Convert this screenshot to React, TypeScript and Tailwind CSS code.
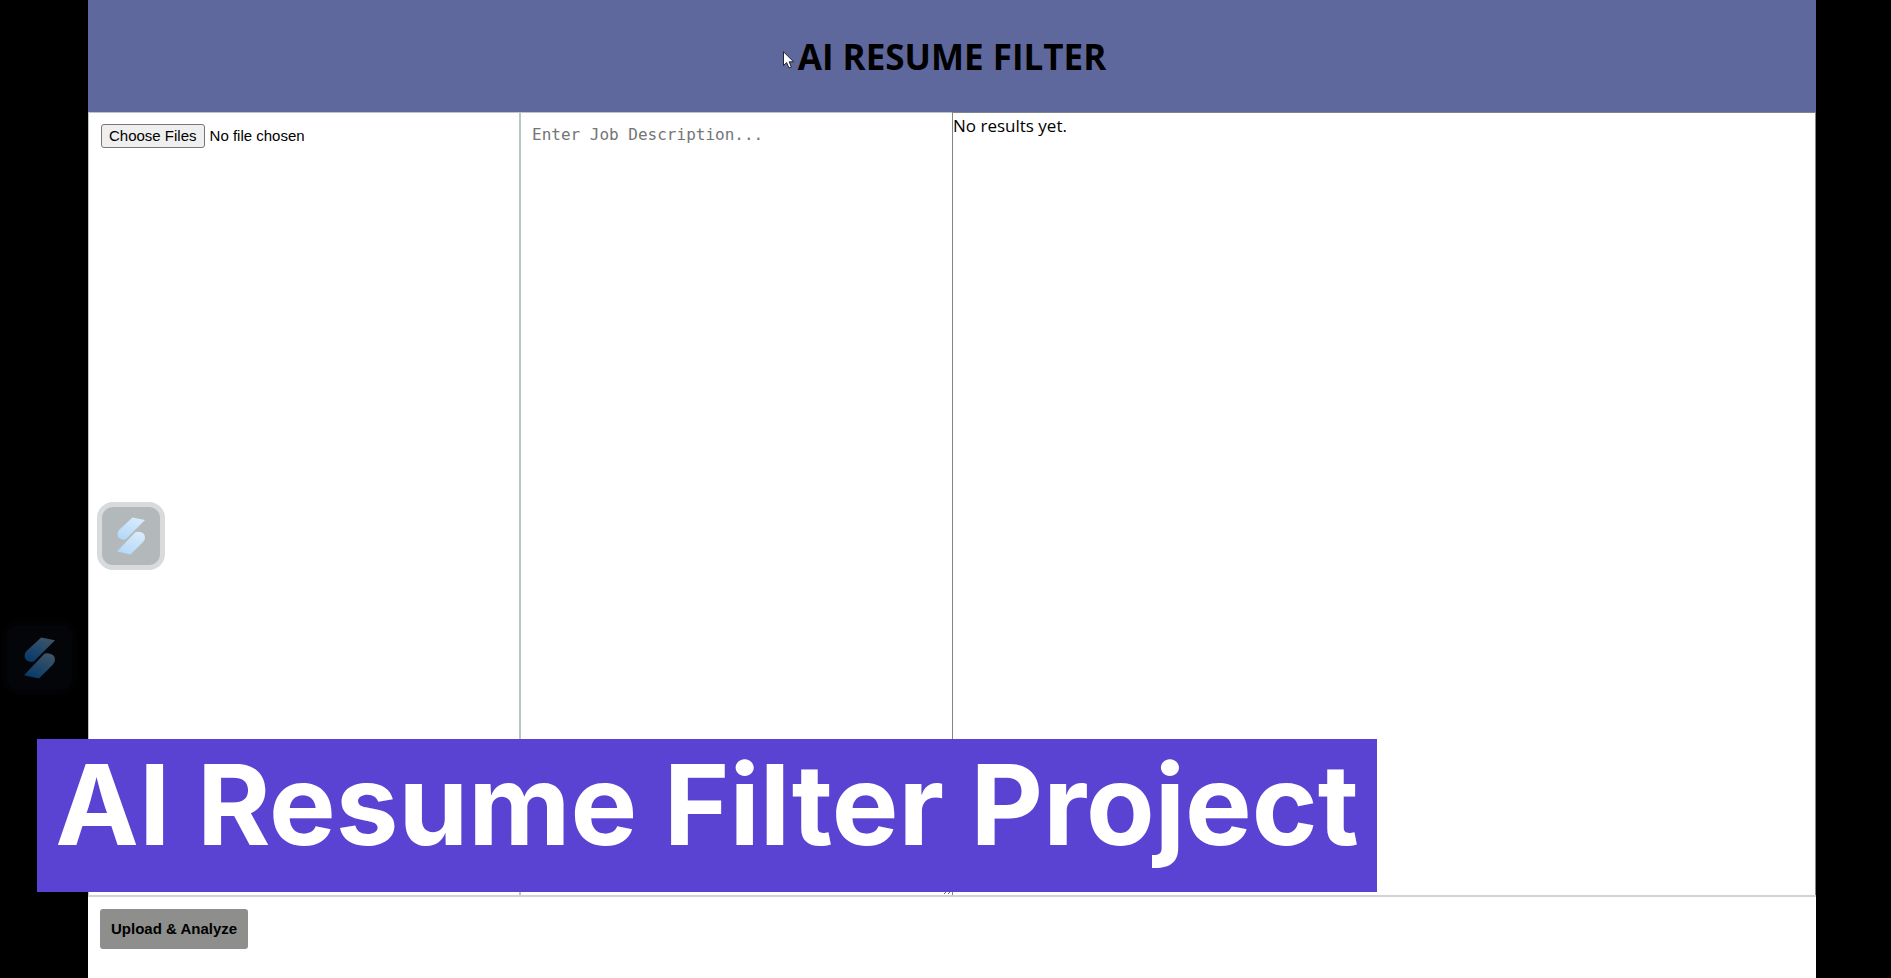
import { useState } from "react";

function SMark({ id, from, to, className }: { id: string; from: string; to: string; className: string }) {
  return (
    <svg viewBox="0 0 28 38" className={className} aria-hidden="true">
      <defs>
        <linearGradient id={id} x1="0.8" y1="0" x2="0.3" y2="1">
          <stop offset="0" stopColor={from} />
          <stop offset="1" stopColor={to} />
        </linearGradient>
      </defs>
      <path d="M15.500 0.500 L28 3 L9.500 21.500 Q8 23 5.500 22.500 Q0.500 21.500 0.500 17 Q0.500 14.500 2.500 12.500 Z" fill={`url(#${id})`} />
      <path d="M0 34.500 L17.500 16 Q19 14.500 21.500 14.800 Q28 15.500 28 20.500 Q28 23 26 25 L13.500 37.500 Z" fill={`url(#${id})`} />
    </svg>
  );
}

export default function App() {
  const [description, setDescription] = useState("");

  return (
    <div className="relative flex min-h-screen flex-col bg-black pl-[88px] pr-[75px] font-['Open_Sans','Noto_Sans',sans-serif] text-black">
      <header className="flex h-28 items-center justify-center bg-[#5f689c] pt-0.5">
        <h1 className="text-[35px] font-bold">AI RESUME FILTER</h1>
      </header>

      <main className="grid flex-1 grid-cols-[1fr_1fr_2fr] border-b-2 border-[#d0d4d4] bg-white">
        <section className="border-l border-t border-[#bcc6c6] px-3 py-[10px]">
          <input
            type="file"
            multiple
            aria-label="Resume files"
            className="w-full font-['Liberation_Sans',sans-serif] text-[15px] leading-5 file:me-[5px] file:rounded-[3px] file:border file:border-solid file:border-[#767676] file:bg-[#efefef] file:px-[7px] file:py-px"
          />
        </section>
        <textarea
          aria-label="Job description"
          placeholder="Enter Job Description..."
          value={description}
          onChange={(event) => setDescription(event.target.value)}
          className="-ml-px resize border-l-2 border-t border-[#bcc6c6] px-[11px] py-[10px] font-['DejaVu_Sans_Mono',monospace] text-base outline-none placeholder:text-[#757575]"
        />
        <section className="border-x border-t border-[#808585]">
          <p className="text-[17px] leading-[26px]">No results yet.</p>
        </section>
      </main>

      <footer className="h-[81px] bg-white px-3 py-3">
        <button
          type="button"
          className="h-10 rounded-[3px] bg-[#8e8f8d] px-[11px] font-['Liberation_Sans',sans-serif] text-[15px] font-bold"
        >
          Upload &amp; Analyze
        </button>
      </footer>

      <div className="absolute left-[97px] top-[502px] flex size-[68px] items-center justify-center rounded-2xl border-[5px] border-[#d8dadc] bg-[#b3b8bb]">
        <SMark id="mark-light" from="#d9ecfb" to="#b5d8f8" className="h-[38px] w-7" />
      </div>
      <div className="absolute left-[2px] top-[620px] flex size-[75px] items-center justify-center rounded-2xl border-[5px] border-[#020205] bg-[#040509]">
        <SMark id="mark-dark" from="#3f5568" to="#083a6a" className="h-[42px] w-[31px]" />
      </div>

      <svg viewBox="0 0 12 18" className="absolute left-[783px] top-[51px] h-[18px] w-3" aria-hidden="true">
        <path d="M0.500 0.800 V14.500 L3.600 11.600 L6 17 L8.400 16 L6.100 10.800 H10.600 Z" fill="#fff" stroke="#15151f" strokeWidth="0.900" />
      </svg>

      <div className="absolute left-[37px] top-[739px] flex h-[153px] w-[1340px] justify-center whitespace-nowrap bg-[#5a42d2] font-['Inter',sans-serif] text-[112px] font-bold leading-[130px] text-white">
        AI Resume Filter Project
      </div>
    </div>
  );
}
